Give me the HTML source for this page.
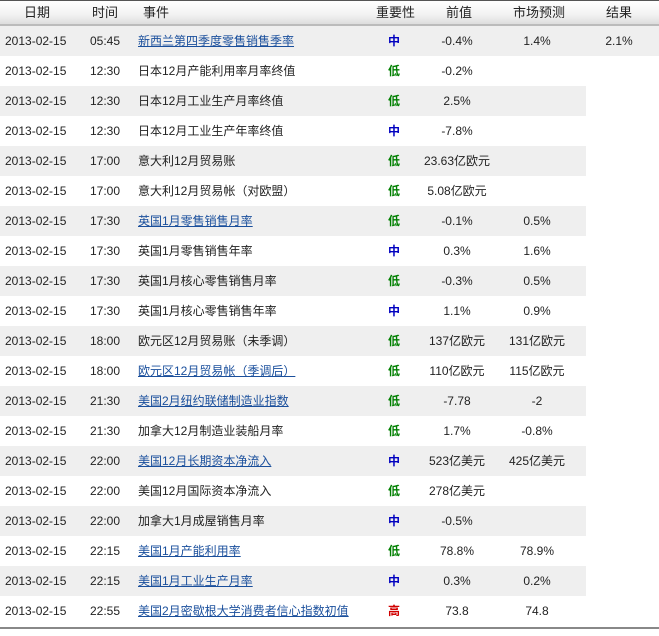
<!DOCTYPE html>
<html><head><meta charset="utf-8"><style>
body{margin:0;width:659px;height:636px;background:#fff;font-family:"Liberation Sans","Noto Sans CJK SC",sans-serif;font-size:12px;color:#222;overflow:hidden;position:relative}
.hd{position:absolute;left:0;top:0;width:659px;height:23px;border-top:1px solid #555;border-bottom:2px solid #bbb;background:linear-gradient(#fff,#f2f2f2 60%,#ddd)}
.hd span,.r span{position:absolute;top:0;white-space:nowrap}
.hd span{line-height:23px;font-size:13px}
.r{position:absolute;left:0;height:30px;width:586px;line-height:30px}
.g{background:#efefef}
.c{text-align:center}
a{color:#1a4f9c;text-decoration:underline}
.m{color:#0000c0;font-weight:bold}.l{color:#008000;font-weight:bold}.h{color:#d00000;font-weight:bold}
.bt{position:absolute;left:0;top:627px;width:659px;height:2px;background:#888}
</style></head><body>
<div class="hd"><span style="left:24px">日期</span><span style="left:92px">时间</span><span style="left:143px">事件</span><span style="left:376px">重要性</span><span style="left:446px">前值</span><span style="left:513px">市场预测</span><span style="left:606px">结果</span></div>
<div id="rows"></div>
<div class="bt"></div>
<script>
var d=[
["05:45","新西兰第四季度零售销售季率",1,"m","-0.4%","1.4%","2.1%"],
["12:30","日本12月产能利用率月率终值",0,"l","-0.2%","",""],
["12:30","日本12月工业生产月率终值",0,"l","2.5%","",""],
["12:30","日本12月工业生产年率终值",0,"m","-7.8%","",""],
["17:00","意大利12月贸易账",0,"l","23.63亿欧元","",""],
["17:00","意大利12月贸易帐（对欧盟）",0,"l","5.08亿欧元","",""],
["17:30","英国1月零售销售月率",1,"l","-0.1%","0.5%",""],
["17:30","英国1月零售销售年率",0,"m","0.3%","1.6%",""],
["17:30","英国1月核心零售销售月率",0,"l","-0.3%","0.5%",""],
["17:30","英国1月核心零售销售年率",0,"m","1.1%","0.9%",""],
["18:00","欧元区12月贸易账（未季调）",0,"l","137亿欧元","131亿欧元",""],
["18:00","欧元区12月贸易帐（季调后）",1,"l","110亿欧元","115亿欧元",""],
["21:30","美国2月纽约联储制造业指数",1,"l","-7.78","-2",""],
["21:30","加拿大12月制造业装船月率",0,"l","1.7%","-0.8%",""],
["22:00","美国12月长期资本净流入",1,"m","523亿美元","425亿美元",""],
["22:00","美国12月国际资本净流入",0,"l","278亿美元","",""],
["22:00","加拿大1月成屋销售月率",0,"m","-0.5%","",""],
["22:15","美国1月产能利用率",1,"l","78.8%","78.9%",""],
["22:15","美国1月工业生产月率",1,"m","0.3%","0.2%",""],
["22:55","美国2月密歇根大学消费者信心指数初值",1,"h","73.8","74.8",""]];
var t={m:"中",l:"低",h:"高"},h="";
d.forEach(function(r,i){
h+='<div class="r'+(i%2==0?' g':'')+'" style="top:'+(26+i*30)+'px'+(i==0?';width:659px':'')+'">'+
'<span style="left:5px">2013-02-15</span><span style="left:90px">'+r[0]+'</span>'+
'<span style="left:138px">'+(r[2]?'<a>'+r[1]+'</a>':r[1])+'</span>'+
'<span class="c '+r[3]+'" style="left:374px;width:40px">'+t[r[3]]+'</span>'+
'<span class="c" style="left:417px;width:80px">'+r[4]+'</span>'+
'<span class="c" style="left:497px;width:80px">'+r[5]+'</span>'+
'<span class="c" style="left:590px;width:58px">'+r[6]+'</span></div>';});
document.getElementById("rows").innerHTML=h;
</script>
</body></html>
